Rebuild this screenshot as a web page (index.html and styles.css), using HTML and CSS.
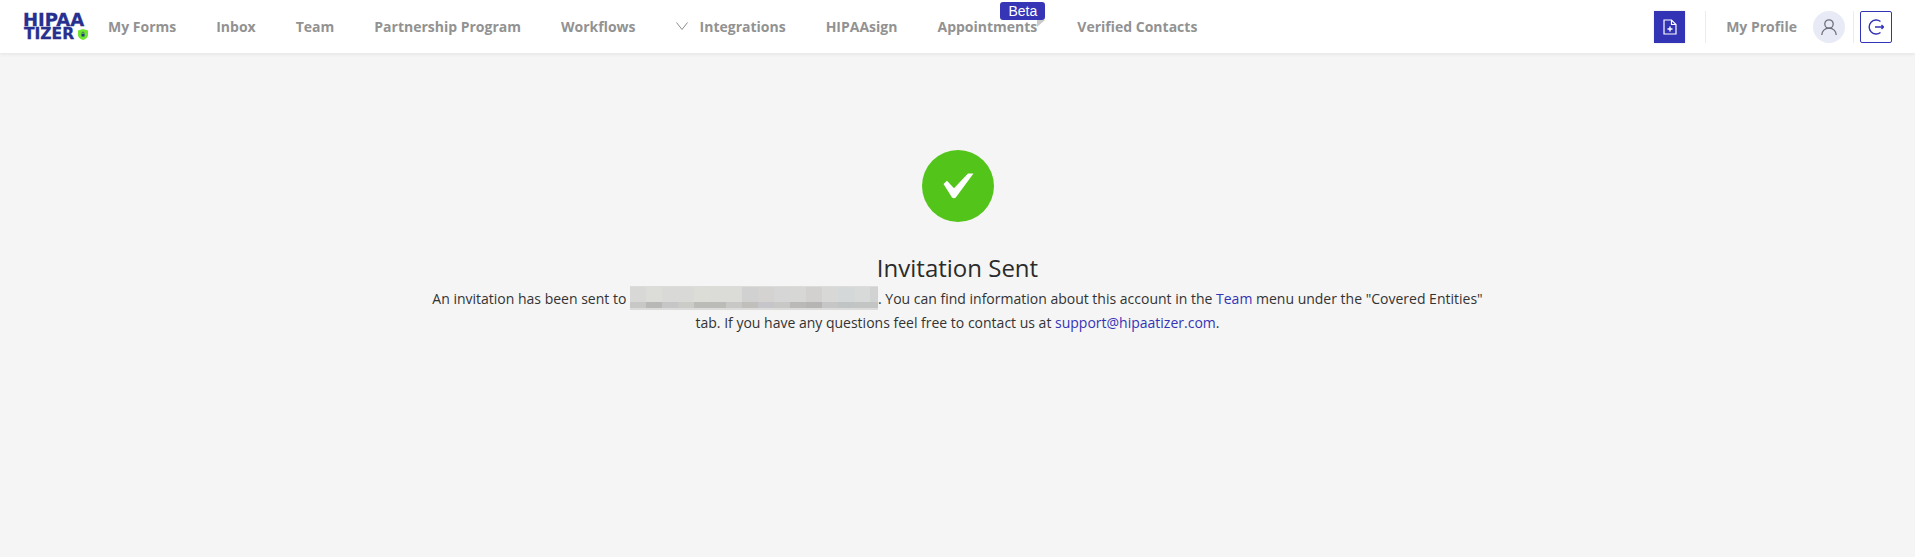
FILE: index.html
```html
<!DOCTYPE html>
<html lang="en">
<head>
<meta charset="utf-8">
<title>Invitation Sent</title>
<link rel="stylesheet" href="styles.css">
</head>
<body>
<header class="topbar">
  <a class="logo" href="#">
    <span class="logo-line">HIPAA</span>
    <span class="logo-line logo-line-b">TIZER</span>
    <svg class="logo-shield" viewBox="0 0 10 11"><path d="M0 1.500 5 0l5 1.500V6c0 2.400-2.200 4-5 5C2.200 10 0 8.400 0 6z" fill="#6fe62e"/><rect x="3.500" y="5" width="3" height="2.500" fill="#27308f"/><path d="M4 5V4a1 1 0 0 1 2 0v1" fill="none" stroke="#27308f" stroke-width=".6"/></svg>
  </a>
  <nav class="nav">
    <a class="nav-item" href="#">My Forms</a>
    <a class="nav-item" href="#">Inbox</a>
    <a class="nav-item" href="#">Team</a>
    <a class="nav-item" href="#">Partnership Program</a>
    <a class="nav-item" href="#">Workflows</a>
    <a class="nav-item nav-chevron" href="#">
      <svg class="chevron" viewBox="0 0 12 8"><path d="M.5.5 6 7.500 11.500.5" fill="none" stroke="#8c8c8c" stroke-width="1"/></svg>
      Integrations
    </a>
    <a class="nav-item" href="#">HIPAAsign</a>
    <a class="nav-item nav-beta" href="#">Appointments
      <span class="beta">Beta</span>
      <span class="beta-fold"></span>
    </a>
    <a class="nav-item" href="#">Verified Contacts</a>
  </nav>
  <div class="actions">
    <button class="doc-btn" type="button" aria-label="New document">
      <svg viewBox="0 0 14 16" width="14" height="16"><path d="M1 1h7.500L13 5.500V15H1z" fill="none" stroke="#fff" stroke-width="1.200"/><path d="M8.500 1v4.500H13" fill="none" stroke="#fff" stroke-width="1.200"/><path d="M7 7.500v5M4.500 10h5" stroke="#fff" stroke-width="1.400"/></svg>
    </button>
    <span class="divider divider-a"></span>
    <a class="profile" href="#">My Profile</a>
    <span class="avatar">
      <svg viewBox="0 0 18 18" width="18" height="18"><circle cx="9" cy="6" r="4.200" fill="none" stroke="#6f6f78" stroke-width="1.300"/><path d="M1.800 17c0-4 3-6.800 7.200-6.800s7.200 2.800 7.200 6.800" fill="none" stroke="#6f6f78" stroke-width="1.300"/></svg>
    </span>
    <span class="divider divider-b"></span>
    <button class="logout-btn" type="button" aria-label="Log out">
      <svg viewBox="0 0 16 16" width="16" height="16"><path d="M12.500 2.500A7 7 0 1 0 12.500 13.500" fill="none" stroke="#3333b5" stroke-width="1.400"/><path d="M7 8H15.500M13.500 6 15.500 8 13.500 10" fill="none" stroke="#3333b5" stroke-width="1.400"/></svg>
    </button>
  </div>
</header>
<main class="content">
  <div class="check">
    <svg viewBox="0 0 72 72" width="72" height="72"><path d="M21.500 34 25 30.700 32 38.300 46 23.500H51.500L33.800 47.500Q32 49 30 47.500Z" fill="#fff"/></svg>
  </div>
  <h1 class="title">Invitation Sent</h1>
  <p class="message">An invitation has been sent to <svg class="redacted" viewBox="0 0 15.500 3" width="248" height="24" preserveAspectRatio="none" shape-rendering="crispEdges"><rect width="15.500" height="3" fill="#dcdcdb"/><g><rect x="0" y=".1" width="1" height="1.900" fill="#d8d8d7"/><rect x="1" y=".1" width="1" height="1.900" fill="#dcdcd8"/><rect x="2" y=".1" width="1" height="1.900" fill="#d9d9d8"/><rect x="3" y=".1" width="1" height="1.900" fill="#d9d9d8"/><rect x="4" y=".1" width="1" height="1.900" fill="#dcddd7"/><rect x="5" y=".1" width="2" height="1.900" fill="#dbdbd8"/><rect x="7" y=".1" width="1" height="1.900" fill="#d2d1d1"/><rect x="8" y=".1" width="1" height="1.900" fill="#d4d3d2"/><rect x="9" y=".1" width="1" height="1.900" fill="#d5d6d5"/><rect x="10" y=".1" width="1" height="1.900" fill="#d7d7d6"/><rect x="11" y=".1" width="1" height="1.900" fill="#d2d1d0"/><rect x="12" y=".1" width="1" height="1.900" fill="#d8d8d7"/><rect x="13" y=".1" width="1" height="1.900" fill="#d4d8d9"/><rect x="14" y=".1" width="1" height="1.900" fill="#d7dad9"/><rect x="15" y=".1" width=".5" height="1.900" fill="#d0d3d2"/></g><g><rect x="0" y="2" width="1" height=".8" fill="#c8c8c7"/><rect x="1" y="2" width="1" height=".8" fill="#b8b8b6"/><rect x="2" y="2" width="1" height=".8" fill="#c5c6c5"/><rect x="3" y="2" width="1" height=".8" fill="#cbcbc7"/><rect x="4" y="2" width="2" height=".8" fill="#bbbbb8"/><rect x="6" y="2" width="1" height=".8" fill="#c8c8c7"/><rect x="7" y="2" width="1" height=".8" fill="#c0bfbc"/><rect x="8" y="2" width="1" height=".8" fill="#c6c6ca"/><rect x="9" y="2" width="1" height=".8" fill="#c8c8c6"/><rect x="10" y="2" width="1" height=".8" fill="#bab9b8"/><rect x="11" y="2" width="1" height=".8" fill="#b6b5b3"/><rect x="12" y="2" width="1" height=".8" fill="#c5c6c5"/><rect x="13" y="2" width="1" height=".8" fill="#c1c4c5"/><rect x="14" y="2" width="1.500" height=".8" fill="#c3c5c4"/></g></svg>. You can find information about this account in the <a href="#">Team</a> menu under the "Covered Entities" tab. If you have any questions feel free to contact us at <a href="#">support@hipaatizer.com</a>.</p>
</main>
</body>
</html>
```
FILE: styles.css
```css
* {
  box-sizing: border-box;
}

html,
body {
  margin: 0;
  height: 100%;
}

body {
  background: #f5f5f5;
  color: #333;
  font-family: "Open Sans", sans-serif;
  overflow: hidden;
}

a {
  text-decoration: none;
}

.topbar {
  display: flex;
  align-items: center;
  height: 53px;
  padding: 0 23px;
  background: #fff;
  box-shadow: 0 1px 4px rgba(0, 0, 0, 0.08);
}

.logo {
  position: relative;
  display: flex;
  flex-direction: column;
  flex: none;
  width: 65px;
  margin-right: 20px;
  color: #27308f;
  font-family: "DejaVu Sans", sans-serif;
  font-weight: 700;
  font-size: 18px;
  line-height: 15px;
  -webkit-text-stroke: 0.3px #27308f;
}

.logo-line-b {
  padding-left: 1px;
  font-size: 15.500px;
  line-height: 14px;
}

.logo-shield {
  position: absolute;
  right: 0;
  bottom: 1px;
  width: 10px;
  height: 11px;
}

.nav {
  display: flex;
  align-items: center;
  gap: 40px;
  font-size: 14px;
  font-weight: 700;
}

.nav-item {
  position: relative;
  color: #929292;
  white-space: nowrap;
}

.nav-chevron {
  display: flex;
  align-items: center;
  gap: 12px;
}

.chevron {
  width: 12px;
  height: 8px;
  margin-top: -1px;
}

.beta {
  position: absolute;
  top: -15px;
  right: -8px;
  width: 45px;
  height: 18px;
  background: #3535b5;
  border-radius: 3px;
  color: #fff;
  font-family: "Liberation Sans", sans-serif;
  font-size: 14px;
  font-weight: 400;
  line-height: 18px;
  text-align: center;
}

.beta-fold {
  position: absolute;
  top: 3px;
  right: -8px;
  width: 0;
  height: 0;
  border-top: 7px solid #c9c9c9;
  border-right: 8px solid transparent;
}

.actions {
  display: flex;
  align-items: center;
  margin-left: auto;
}

.doc-btn {
  display: flex;
  align-items: center;
  justify-content: center;
  width: 31px;
  height: 32px;
  padding: 0;
  background: #3333b5;
  border: 0;
  box-shadow: 0 0 2px rgba(0, 0, 0, 0.15);
}

.divider {
  width: 1px;
  height: 32px;
  background: #ececec;
}

.divider-a {
  margin: 0 20px;
}

.profile {
  color: #929292;
  font-size: 14px;
  font-weight: 700;
  white-space: nowrap;
}

.avatar {
  display: flex;
  align-items: center;
  justify-content: center;
  width: 32px;
  height: 32px;
  margin-left: 16px;
  background: #e8eaf5;
  border-radius: 50%;
}

.divider-b {
  margin: 0 6px 0 8px;
}

.logout-btn {
  display: flex;
  align-items: center;
  justify-content: center;
  width: 32px;
  height: 32px;
  padding: 0;
  background: #fff;
  border: 1px solid #3333b5;
  border-radius: 2px;
}

.content {
  display: flex;
  flex-direction: column;
  align-items: center;
  padding-top: 97px;
}

.check {
  display: flex;
  width: 72px;
  height: 72px;
  background: #52c41a;
  border-radius: 50%;
}

.title {
  margin: 30px 0 0;
  color: #2b2b2b;
  font-size: 24px;
  font-weight: 400;
  line-height: 32px;
}

.message {
  width: 1060px;
  margin: 3px 0 0;
  color: #333;
  font-size: 14px;
  line-height: 24px;
  text-align: center;
}

.message a {
  color: #3333b5;
}

.redacted {
  height: 24px;
  margin: -6px 0;
  vertical-align: 0;
}
```
